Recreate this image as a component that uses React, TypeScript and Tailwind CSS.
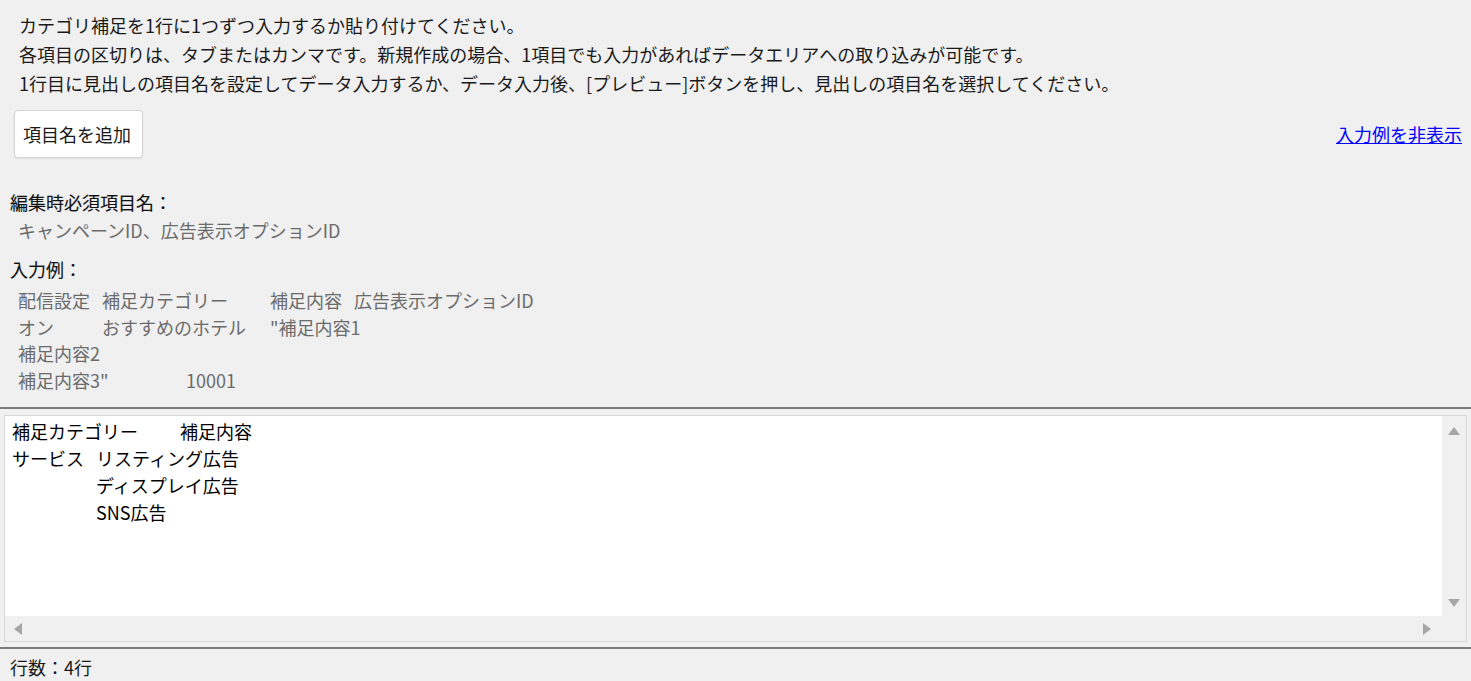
import React from "react";

function TriUp() {
  return (
    <svg width="12" height="8" viewBox="0 0 12 8"><path d="M6 0 L12 8 L0 8 Z" fill="#a6a6a6" /></svg>
  );
}
function TriDown() {
  return (
    <svg width="12" height="8" viewBox="0 0 12 8"><path d="M0 0 L12 0 L6 8 Z" fill="#a6a6a6" /></svg>
  );
}
function TriLeft() {
  return (
    <svg width="8" height="12" viewBox="0 0 8 12"><path d="M8 0 L8 12 L0 6 Z" fill="#a6a6a6" /></svg>
  );
}
function TriRight() {
  return (
    <svg width="8" height="12" viewBox="0 0 8 12"><path d="M0 0 L8 6 L0 12 Z" fill="#a6a6a6" /></svg>
  );
}

export default function App() {
  const example = [
    "配信設定\t補足カテゴリー\t補足内容\t広告表示オプションID",
    "オン\tおすすめのホテル\t\"補足内容1",
    "補足内容2",
    "補足内容3\"\t10001",
  ];
  const data = [
    "補足カテゴリー\t補足内容",
    "サービス\tリスティング広告",
    "\tディスプレイ広告",
    "\tSNS広告",
  ];
  return (
    <div className="w-[1471px] h-[681px] overflow-hidden bg-[#f0f0f0] font-['Noto_Sans_CJK_JP',sans-serif] text-[18px] text-[#1a1a1a] flex flex-col">
      <div className="pl-[19px] pt-[11px] leading-[29px]">
        <p>カテゴリ補足を1行に1つずつ入力するか貼り付けてください。</p>
        <p>各項目の区切りは、タブまたはカンマです。新規作成の場合、1項目でも入力があればデータエリアへの取り込みが可能です。</p>
        <p>1行目に見出しの項目名を設定してデータ入力するか、データ入力後、[プレビュー]ボタンを押し、見出しの項目名を選択してください。</p>
      </div>
      <div className="mt-[12px] flex items-center justify-between pl-[14px] pr-[9px]">
        <button className="h-[48px] w-[129px] rounded-[4px] border border-[#d4d4d4] bg-white text-left pl-[8px] text-[#1a1a1a] shadow-[0_1px_2px_rgba(0,0,0,0.08)]">
          項目名を追加
        </button>
        <a href="#" className="text-[#0000ff] underline leading-[28px]">入力例を非表示</a>
      </div>
      <div className="mt-[30px] pl-[10px] leading-[28px] text-[#111] [-webkit-text-stroke:0.12px]">編集時必須項目名：</div>
      <div className="pl-[18px] leading-[28px] text-[#6b6b6b]">キャンペーンID、広告表示オプションID</div>
      <div className="mt-[11px] pl-[10px] leading-[28px] text-[#111] [-webkit-text-stroke:0.12px]">入力例：</div>
      <div className="mt-[4px] pl-[18px] leading-[26.7px] text-[#6b6b6b] whitespace-pre [tab-size:84px]">
        {example.map((l, i) => (
          <div key={i}>{l}</div>
        ))}
      </div>
      <div className="mt-[13px] border-t-2 border-[#7a7a7a]" />
      <div className="mt-[6px] mx-[4px] h-[228px] border border-[#d9d9d9] grid grid-cols-[1fr_24px] grid-rows-[1fr_25px]">
        <div className="bg-white pl-[7px] pt-[2px] leading-[27px] text-black whitespace-pre [tab-size:84px]">
          {data.map((l, i) => (
            <div key={i}>{l}</div>
          ))}
        </div>
        <div className="bg-[#f0f0f0] flex flex-col items-center justify-between pt-[11px] pb-[9px]">
          <TriUp />
          <TriDown />
        </div>
        <div className="bg-[#f0f0f0] flex items-center justify-between pl-[9px] pr-[11px]">
          <TriLeft />
          <TriRight />
        </div>
        <div className="bg-[#f0f0f0]" />
      </div>
      <div className="mt-[5px] border-t-2 border-[#7a7a7a]" />
      <div className="mt-[4px] pl-[10px] leading-[28px]">行数：4行</div>
    </div>
  );
}
